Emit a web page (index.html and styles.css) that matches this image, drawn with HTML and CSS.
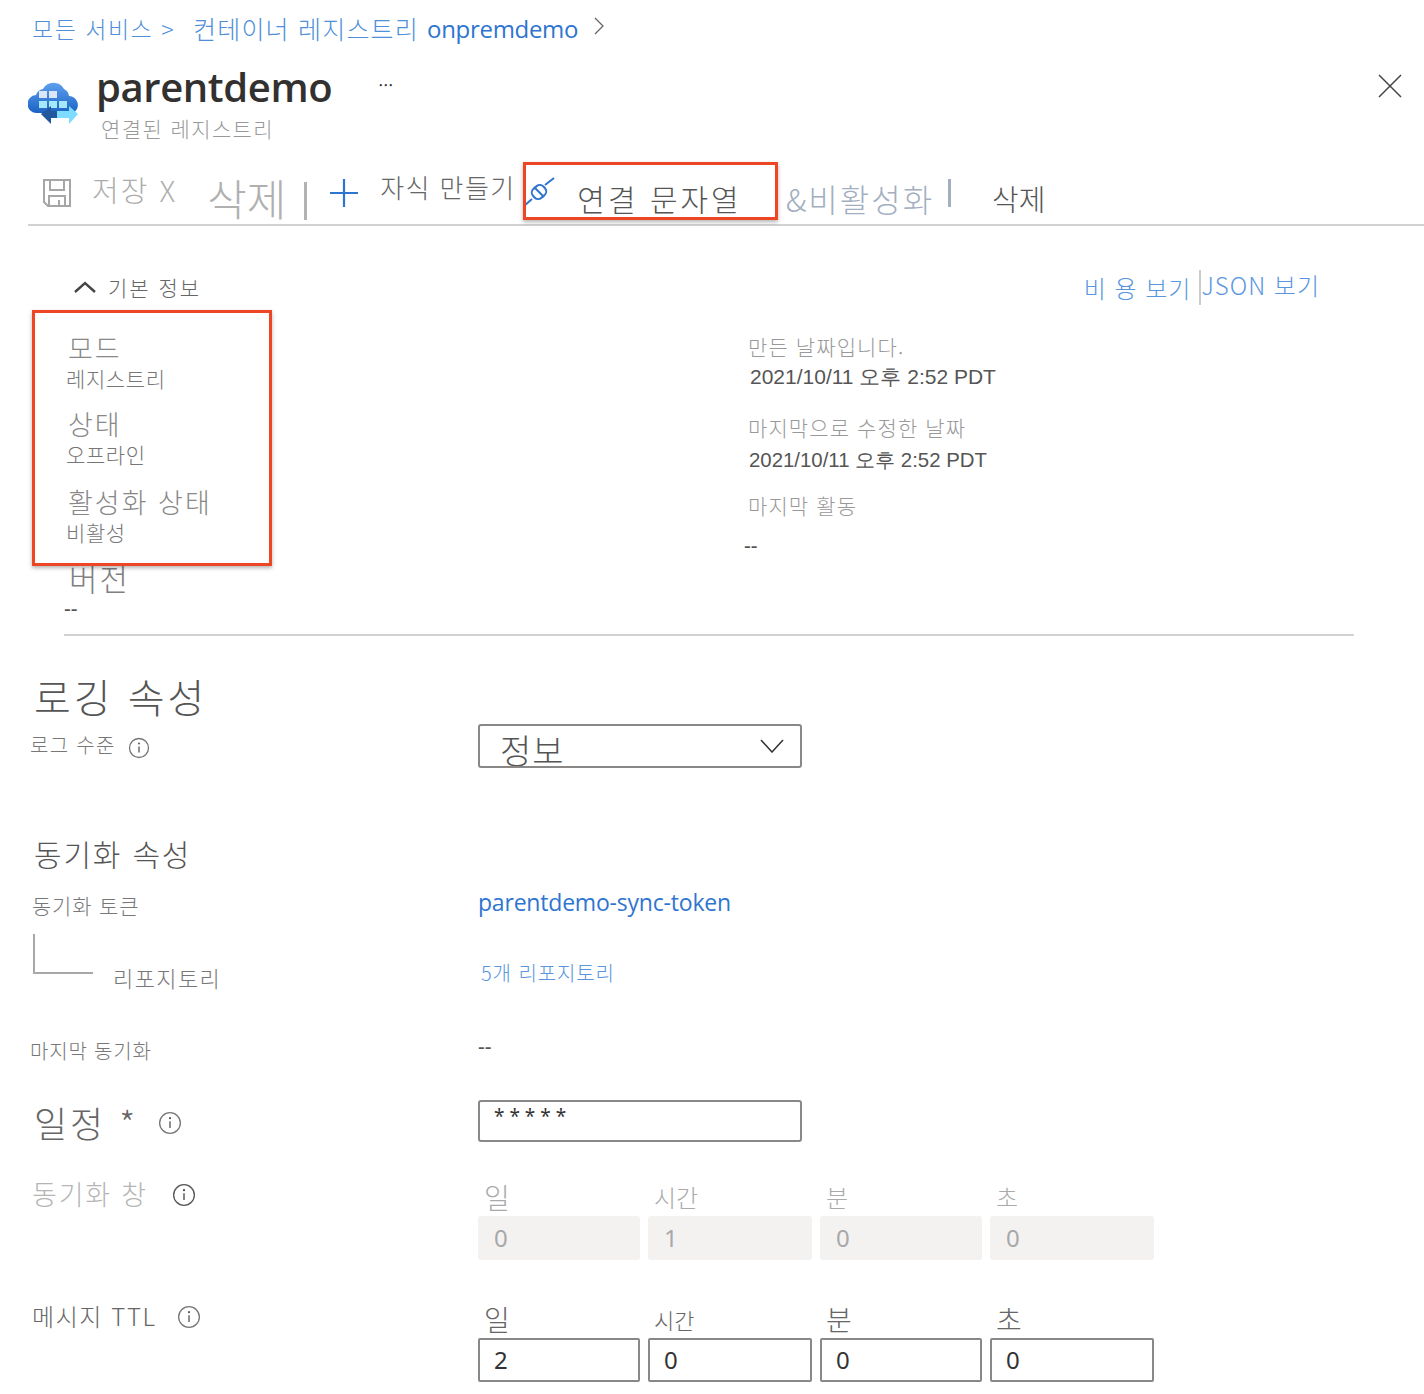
FILE: index.html
```html
<!DOCTYPE html>
<html lang="ko">
<head>
<meta charset="utf-8">
<title>parentdemo</title>
<link rel="stylesheet" href="styles.css">
</head>
<body>
<div class="page">
  <nav class="crumbs">
    <span class="crumb">모든 서비스 &gt;</span>
    <span class="crumb crumb-b">컨테이너 레지스트리</span>
    <span class="crumb-strong">onpremdemo</span>
    <svg class="crumb-chev" width="12" height="20" viewBox="0 0 12 20"><path d="M2 2l8 8-8 8" fill="none" stroke="#666" stroke-width="1.3"/></svg>
  </nav>

  <header class="head">
    <svg class="logo" width="52" height="50" viewBox="0 0 52 50">
      <defs><linearGradient id="cl" x1="0" y1="0" x2="0" y2="1"><stop offset="0" stop-color="#5ea0ef"/><stop offset="1" stop-color="#1b63c4"/></linearGradient></defs>
      <path d="M9 36a9 9 0 0 1-1-18 9 9 0 0 1 7-6 12 12 0 0 1 21 0 9 9 0 0 1 5 7 9 9 0 0 1 4 17z" fill="url(#cl)" transform="translate(0 -1)"/>
      <rect x="11" y="13" width="8" height="7" fill="#dbe7f8"/><rect x="21" y="13" width="8" height="7" fill="#dbe7f8"/>
      <rect x="11" y="23" width="8" height="7" fill="#a5e7fb"/><rect x="21" y="23" width="8" height="7" fill="#a5e7fb"/><rect x="31" y="23" width="8" height="7" fill="#a5e7fb"/>
      <path d="M13 36l10-8v5h6v7h-6v6z" fill="#24589e"/>
      <path d="M50 36l-9-8v5H29v7h12v6z" fill="#7ddcff"/>
    </svg>
    <div class="head-text">
      <div class="title-row"><h1 class="title">parentdemo</h1><span class="more">···</span></div>
      <div class="subtitle">연결된 레지스트리</div>
    </div>
    <svg class="close" width="24" height="24" viewBox="0 0 24 24"><path d="M1 1l22 22M23 1L1 23" stroke="#444" stroke-width="1.5" fill="none"/></svg>
  </header>

  <div class="toolbar">
    <svg class="tb-save" width="30" height="30" viewBox="0 0 30 30"><path d="M2 2h26v26H6l-4-4zM8 2v10h14V2M7 28V18h16v10M17 22v6" fill="none" stroke="#a6a6a6" stroke-width="2"/></svg>
    <span class="tb-save-label">저장 X</span>
    <span class="tb-del1">삭제</span>
    <span class="tb-sep"></span>
    <svg class="tb-plus" width="30" height="30" viewBox="0 0 30 30"><path d="M15 1v28M1 15h28" stroke="#2f75cf" stroke-width="2.2" fill="none"/></svg>
    <span class="tb-child">자식 만들기</span>
    <svg class="tb-plug" width="32" height="30" viewBox="0 0 32 30"><g fill="none" stroke="#2f75cf" stroke-width="2"><path d="M1 29l8-7M22 8l9-7"/><rect x="9" y="9" width="14" height="12" rx="5" transform="rotate(-40 16 15)"/><path d="M11 10l10 10"/></g></svg>
    <span class="tb-conn">연결 문자열</span>
    <span class="tb-dis">&amp;비활성화</span>
    <span class="tb-mark"></span>
    <span class="tb-del2">삭제</span>
  </div>

  <section class="basics">
    <div class="basics-head">
      <svg class="chev-up" width="24" height="14" viewBox="0 0 24 14"><path d="M2 12l10-9 10 9" fill="none" stroke="#444" stroke-width="2.4"/></svg>
      <span class="basics-title">기본 정보</span>
      <span class="links"><span class="link-a">비 용 보기</span><span class="link-b">JSON 보기</span></span>
    </div>
    <div class="basics-grid">
      <div class="col-left">
        <div class="lbl-lg lbl-mode">모드</div>
        <div class="val-sm">레지스트리</div>
        <div class="lbl-lg lbl-state">상태</div>
        <div class="val-sm val-off">오프라인</div>
        <div class="lbl-lg lbl-act">활성화 상태</div>
        <div class="val-sm val-in">비활성</div>
        <div class="lbl-xl">버전</div>
        <div class="dash">--</div>
      </div>
      <div class="col-right">
        <div class="lbl-r">만든 날짜입니다.</div>
        <div class="date d1">2021/10/11 오후 2:52 PDT</div>
        <div class="lbl-r r2">마지막으로 수정한 날짜</div>
        <div class="date d2">2021/10/11 오후 2:52 PDT</div>
        <div class="lbl-r r3">마지막 활동</div>
        <div class="dash dash-r">--</div>
      </div>
    </div>
    <div class="callout callout-left"></div>
  </section>
  <div class="callout callout-top"></div>

  <hr class="rule">

  <h2 class="h-log">로깅 속성</h2>
  <div class="row row-log">
    <div class="r-label"><span class="t-log">로그 수준</span><svg class="info" width="22" height="22" viewBox="0 0 22 22"><circle cx="11" cy="11" r="9.5" fill="none" stroke="#777" stroke-width="1.3"/><path d="M11 9.5v6" stroke="#555" stroke-width="1.3"/><circle cx="11" cy="6.6" r="1" fill="#555"/></svg></div>
    <div class="select"><span class="select-text">정보</span><svg width="24" height="14" viewBox="0 0 24 14"><path d="M1 1l11 12L23 1" fill="none" stroke="#333" stroke-width="1.5"/></svg></div>
  </div>

  <h2 class="h-sync">동기화 속성</h2>
  <div class="row row-token">
    <div class="t-token">동기화 토큰</div>
    <div class="token-link">parentdemo-sync-token</div>
  </div>
  <div class="row row-repo">
    <div class="repo-label"><span class="tree"></span><span class="t-repo">리포지토리</span></div>
    <div class="repo-link">5개 리포지토리</div>
  </div>
  <div class="row row-last">
    <div class="t-last">마지막 동기화</div>
    <div class="dash dash-last">--</div>
  </div>
  <div class="row row-sched">
    <div class="r-label"><span class="t-sched">일정 *</span><svg class="info" width="24" height="24" viewBox="0 0 22 22"><circle cx="11" cy="11" r="9.5" fill="none" stroke="#777" stroke-width="1.2"/><path d="M11 9.5v6" stroke="#555" stroke-width="1.2"/><circle cx="11" cy="6.6" r="1" fill="#555"/></svg></div>
    <div class="input sched-input">* * * * *</div>
  </div>
  <div class="row row-win">
    <div class="r-label"><span class="t-win">동기화 창</span><svg class="info" width="24" height="24" viewBox="0 0 22 22"><circle cx="11" cy="11" r="9.5" fill="none" stroke="#555" stroke-width="1.2"/><path d="M11 9.5v6" stroke="#444" stroke-width="1.2"/><circle cx="11" cy="6.6" r="1" fill="#444"/></svg></div>
    <div class="fields">
      <div class="field f1"><div class="f-lbl off big">일</div><div class="box off-box">0</div></div>
      <div class="field f2"><div class="f-lbl off">시간</div><div class="box off-box">1</div></div>
      <div class="field f3"><div class="f-lbl off">분</div><div class="box off-box clip">0</div></div>
      <div class="field f4"><div class="f-lbl off">초</div><div class="box off-box">0</div></div>
    </div>
  </div>
  <div class="row row-ttl">
    <div class="r-label"><span class="t-ttl">메시지 TTL</span><svg class="info" width="24" height="24" viewBox="0 0 22 22"><circle cx="11" cy="11" r="9.5" fill="none" stroke="#777" stroke-width="1.2"/><path d="M11 9.5v6" stroke="#555" stroke-width="1.2"/><circle cx="11" cy="6.6" r="1" fill="#555"/></svg></div>
    <div class="fields">
      <div class="field f1"><div class="f-lbl big">일</div><div class="box">2</div></div>
      <div class="field f2"><div class="f-lbl small">시간</div><div class="box">0</div></div>
      <div class="field f3"><div class="f-lbl big">분</div><div class="box">0</div></div>
      <div class="field f4"><div class="f-lbl big">초</div><div class="box">0</div></div>
    </div>
  </div>
</div>
</body>
</html>
```
FILE: styles.css
```css
* { box-sizing: border-box; }
html, body { margin: 0; background: #fff; }
body { font-family: "Noto Sans CJK KR", "Noto Sans", sans-serif; font-weight: 300; color: #555; }
.page { position: relative; width: 1424px; height: 1394px; overflow: hidden; }

.crumbs { display: flex; align-items: center; height: 56px; padding-left: 32px; color: #4f8fd8; }
.crumb { font-size: 23px; letter-spacing: 1.5px; }
.crumb-b { margin-left: 18px; font-size: 25px; letter-spacing: 1.2px; }
.crumb-strong { margin-left: 8px; font-family: "Open Sans", sans-serif; font-weight: 400; font-size: 24px; letter-spacing: -.3px; color: #2f75cf; }
.crumb-chev { margin-left: 15px; margin-top: -5px; }

.head { display: flex; align-items: flex-start; height: 90px; padding-left: 28px; }
.logo { margin-top: 22px; flex: none; }
.head-text { margin-left: 16px; }
.title-row { display: flex; align-items: center; height: 60px; }
.title { margin: 0; font-family: "Open Sans", sans-serif; font-weight: 600; font-size: 40px; letter-spacing: -.4px; color: #323130; }
.more { margin-left: 46px; margin-top: -4px; font-size: 20px; color: #333; }
.subtitle { margin: -2px 0 0 5px; font-size: 21px; line-height: 28px; letter-spacing: 1.4px; color: #999; }
.close { margin: 18px 22px 0 auto; }

.toolbar { display: flex; align-items: flex-start; height: 80px; margin-left: 28px; border-bottom: 2px solid #d2d2d2; position: relative; }
.tb-save { margin: 32px 0 0 14px; }
.tb-save-label { margin: 22px 0 0 20px; font-size: 29px; line-height: 42px; letter-spacing: 2px; color: #adadad; }
.tb-del1 { margin: 22px 0 0 30px; font-size: 43px; line-height: 58px; color: #b0b0b0; }
.tb-sep { width: 3px; height: 38px; margin: 36px 0 0 18px; background: #b3b3b3; }
.tb-plus { margin: 32px 0 0 22px; }
.tb-child { margin: 20px 0 0 21px; font-size: 26px; line-height: 42px; letter-spacing: 1.4px; color: #666; white-space: nowrap; width: 143px; }
.tb-plug { margin: 31px 0 0 0; flex: none; }
.tb-conn { margin: 30px 0 0 22px; font-size: 30px; line-height: 44px; letter-spacing: 3px; color: #555; white-space: nowrap; }
.tb-dis { margin: 30px 0 0 44px; font-size: 32px; line-height: 44px; letter-spacing: 2px; color: #a3afc0; white-space: nowrap; }
.tb-mark { width: 8px; height: 28px; margin: 33px 0 0 14px; border-left: 3px solid #a3afc0; position: relative; }
.tb-del2 { margin: 30px 0 0 36px; font-size: 29px; line-height: 44px; color: #555; white-space: nowrap; }

.basics { position: relative; }
.basics-head { display: flex; align-items: center; height: 50px; margin-top: 36px; padding-left: 73px; }
.basics-title { margin-left: 11px; font-size: 21px; letter-spacing: 2px; color: #666; }
.links { display: flex; margin-left: auto; margin-right: 104px; font-size: 24px; letter-spacing: 1px; color: #5a96de; }
.link-b { margin-left: 8px; border-left: 2px solid #ccc; line-height: 30px; }

.basics-grid { display: grid; grid-template-columns: 684px 1fr; padding-left: 66px; }
.lbl-lg { font-size: 27px; line-height: 36px; letter-spacing: 2px; color: #888; padding-left: 2px; }
.lbl-mode { margin-top: 18px; }
.lbl-state { margin-top: 14px; }
.lbl-act { margin-top: 16px; }
.val-sm { font-size: 21px; line-height: 28px; margin-top: -2px; color: #777; letter-spacing: .6px; }
.lbl-xl { font-size: 31px; line-height: 40px; letter-spacing: 2px; color: #808080; margin-top: 12px; padding-left: 3px; }
.dash { font-family: "Noto Sans", sans-serif; font-weight: 400; font-size: 21px; line-height: 20px; color: #555; margin-left: -2px; }

.lbl-r { font-size: 21px; line-height: 30px; margin-top: 19px; letter-spacing: 1.1px; color: #999; margin-left: -2px; }
.date { font-family: "Liberation Sans", sans-serif; font-weight: 400; font-size: 21px; line-height: 30px; margin-top: 1px; color: #555; white-space: nowrap; }
.d2 { margin-left: -1px; font-size: 20.4px; margin-top: 3px; }
.r2 { margin-top: 20px; }
.r3 { margin-top: 15px; }
.dash-r { margin: 15px 0 0 -6px; }

.callout { position: absolute; border: 3px solid #ee4524; box-shadow: 0 2px 4px rgba(0,0,0,.3); pointer-events: none; }
.callout-top { left: 523px; top: 162px; width: 255px; height: 58px; }
.callout-left { left: 32px; top: 48px; width: 240px; height: 256px; }

.rule { margin: 0 0 0 64px; width: 1290px; border: 0; border-top: 2px solid #d2d2d2; position: absolute; top: 634px; }

.h-log { position: absolute; top: 668px; margin: 0; left: 34px; font-weight: 300; font-size: 40px; line-height: 56px; letter-spacing: 3px; color: #555; }
.row { display: grid; grid-template-columns: 448px 1fr; padding-left: 30px; position: absolute; left: 0; right: 0; }
.row-log { top: 724px; }
.r-label { display: flex; align-items: flex-start; }
.t-log { font-size: 20px; line-height: 40px; margin-top: 1px; letter-spacing: 1.3px; color: #777; }
.row-log .info { margin: 13px 0 0 12px; }
.select { display: flex; justify-content: space-between; align-items: center; width: 324px; height: 44px; padding: 0 16px 0 20px; border: 2px solid #8a8886; border-radius: 3px; overflow: hidden; }
.select-text { font-size: 34px; line-height: 44px; letter-spacing: 1px; margin-top: 8px; color: #555; }

.h-sync { position: absolute; top: 830px; left: 34px; margin: 0; font-weight: 300; font-size: 30px; line-height: 46px; letter-spacing: 1.8px; color: #555; }
.row-token { top: 884px; }
.t-token { padding-left: 2px; font-size: 21px; line-height: 42px; letter-spacing: .8px; color: #777; }
.token-link { font-family: "Open Sans", sans-serif; font-weight: 400; font-size: 23px; line-height: 36px; letter-spacing: -.2px; color: #2f75cf; }
.row-repo { top: 934px; }
.repo-label { display: flex; align-items: flex-start; padding-left: 3px; }
.tree { width: 60px; height: 40px; border-left: 2px solid #a8a8a8; border-bottom: 2px solid #a8a8a8; }
.t-repo { margin: 26px 0 0 20px; font-size: 22px; line-height: 34px; letter-spacing: 1.4px; color: #777; }
.repo-link { margin: 22px 0 0 3px; font-size: 20px; line-height: 34px; letter-spacing: .9px; color: #5a96de; }
.row-last { top: 1036px; }
.t-last { font-size: 20px; line-height: 30px; letter-spacing: .8px; color: #777; }
.dash-last { margin: 0; line-height: 20px; }
.row-sched { top: 1100px; }
.t-sched { font-size: 36px; line-height: 44px; letter-spacing: 3px; margin-left: 4px; color: #666; }
.row-sched .info { margin: 11px 0 0 20px; }
.input { width: 324px; height: 42px; padding: 0 14px; border: 2px solid #8a8886; border-radius: 3px; font-family: "Noto Sans", sans-serif; font-weight: 400; font-size: 19px; line-height: 28px; color: #333; }
.row-win { top: 1176px; }
.t-win { font-size: 27px; line-height: 36px; margin-left: 2px; letter-spacing: 1.8px; color: #b5b5b5; }
.row-win .info { margin: 7px 0 0 24px; }
.fields { display: flex; gap: 8px; }
.field { width: 162px; }
.f2 { width: 164px; }
.f4 { width: 164px; }
.f-lbl { height: 40px; padding: 2px 0 0 6px; font-size: 24px; line-height: 38px; color: #666; }
.f-lbl.off { color: #aaa; }
.f-lbl.big { font-size: 28px; }
.f-lbl.small { font-size: 22px; }
.box { height: 44px; padding-left: 14px; border: 2px solid #8a8886; border-radius: 2px; font-family: "Noto Sans", sans-serif; font-weight: 400; font-size: 24px; line-height: 40px; color: #333; }
.off-box { border: 0; background: #f3f2f1; color: #a8a8a8; padding-left: 16px; line-height: 44px; border-radius: 3px; }
.clip { overflow: hidden; text-indent: 0; position: relative; }
.row-ttl { top: 1298px; }
.t-ttl { font-size: 24px; line-height: 36px; margin-left: 2px; letter-spacing: 1.6px; color: #666; }
.row-ttl .info { margin: 7px 0 0 20px; }
```
